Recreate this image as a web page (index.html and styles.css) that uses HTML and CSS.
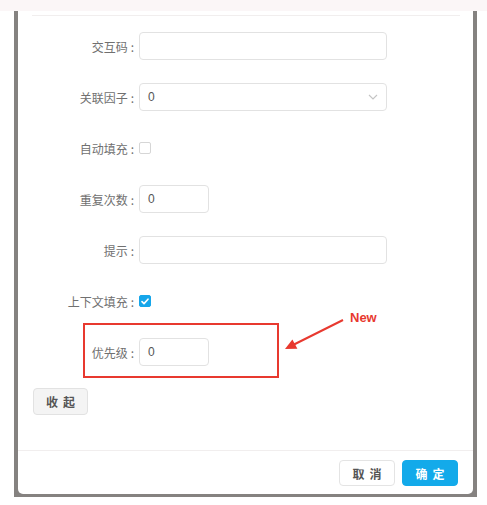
FILE: index.html
```html
<!DOCTYPE html>
<html lang="zh-CN">
<head>
    <meta charset="UTF-8">
    <title>编辑</title>
    <link rel="stylesheet" href="styles.css">
</head>
<body>
    <div class="top-strip"></div>
    <div class="frame">
        <div class="modal">
            <div class="modal-header"></div>

            <div class="modal-body">
                <div class="form-row">
                    <label class="form-label">交互码</label>
                    <div class="input wide"></div>
                </div>
                <div class="form-row">
                    <label class="form-label">关联因子</label>
                    <div class="input wide select">
                        <span>0</span>
                        <svg class="chevron" width="10" height="6" viewBox="0 0 10 6"><path d="M1 1l4 4 4-4" fill="none" stroke="#c4c4c4" stroke-width="1.1"/></svg>
                    </div>
                </div>
                <div class="form-row">
                    <label class="form-label">自动填充</label>
                    <span class="checkbox"></span>
                </div>
                <div class="form-row">
                    <label class="form-label">重复次数</label>
                    <div class="input short"><span>0</span></div>
                </div>
                <div class="form-row">
                    <label class="form-label">提示</label>
                    <div class="input wide"></div>
                </div>
                <div class="form-row">
                    <label class="form-label">上下文填充</label>
                    <span class="checkbox checked">
                        <svg width="8" height="7" viewBox="0 0 8 7"><path d="M1 3.6l2 2 4-4.4" fill="none" stroke="#fff" stroke-width="1.6" stroke-linecap="round" stroke-linejoin="round"/></svg>
                    </span>
                </div>
                <div class="form-row">
                    <label class="form-label">优先级</label>
                    <div class="input short"><span>0</span></div>
                </div>

                <button class="btn btn-gray">收起</button>
            </div>

            <div class="modal-footer">
                <button class="btn btn-white">取消</button>
                <button class="btn btn-blue">确定</button>
            </div>
        </div>

        <!-- annotation drawn over the dialog -->
        <div class="mark-box"></div>
        <svg class="mark-arrow" width="72" height="44" viewBox="0 0 72 44">
            <line x1="63" y1="9" x2="14" y2="33.5" stroke="#e8392f" stroke-width="2"/>
            <polygon points="5,38 12.4,28.4 17.4,37.8" fill="#e8392f"/>
        </svg>
        <div class="mark-text">New</div>
    </div>
</body>
</html>
```

FILE: styles.css
```css
body {
    margin: 0;
    background: #ffffff;
    font-family: "Liberation Sans", "Noto Sans CJK SC", sans-serif;
    font-size: 12px;
    color: #666;
}

.top-strip {
    height: 11px;
    background: #fbf6f7;
}

/* grey window edge round the dialog */
.frame {
    position: relative;
    width: 455px;
    margin-left: 14px;
    padding: 0 4px 3px 4px;
    background: #858280;
}

.modal {
    background: #ffffff;
    border-radius: 0 0 5px 5px;
}

.modal-header {
    height: 4px;
    margin: 0 13px 0 14px;
    border-bottom: 1px solid #f1eeee;
}

.modal-body {
    padding: 16px 0 35px 15px;
}

.form-row {
    display: flex;
    align-items: center;
    height: 28px;
    margin-bottom: 23px;
}

.form-row:last-of-type {
    margin-bottom: 22px;
}

.form-label {
    width: 101px;
    padding-right: 5px;
    text-align: right;
    color: #707070;
    font-family: "Noto Sans CJK SC", sans-serif;
    font-size: 12px;
    white-space: nowrap;
}

.form-label::after {
    content: ":";
    margin-left: 3px;
}

.input {
    box-sizing: border-box;
    height: 28px;
    border: 1px solid #e2e2e2;
    border-radius: 4px;
    display: flex;
    align-items: center;
    padding: 0 8px;
    color: #555;
    font-size: 12px;
}

.input.wide {
    width: 248px;
}

.input.short {
    width: 70px;
}

.select {
    justify-content: space-between;
    padding-right: 8px;
}

.checkbox {
    box-sizing: border-box;
    width: 12px;
    height: 12px;
    border: 1px solid #d6d6d6;
    border-radius: 2px;
    background: #fff;
    display: flex;
    align-items: center;
    justify-content: center;
}

.checkbox.checked {
    background: #16a6ea;
    border-color: #16a6ea;
}

.btn {
    box-sizing: border-box;
    height: 27px;
    border-radius: 4px;
    font-family: "Noto Sans CJK SC", sans-serif;
    font-size: 12px;
    font-weight: bold;
    letter-spacing: 5px;
    padding: 0 0 0 5px;
    cursor: pointer;
}

.btn-gray {
    width: 55px;
    background: #f4f4f4;
    border: 1px solid #e2e2e2;
    color: #555;
}

.modal-footer {
    border-top: 1px solid #f1eeee;
    padding: 9px 15px 8px 0;
    display: flex;
    justify-content: flex-end;
    gap: 7px;
}

.modal-footer .btn {
    width: 56px;
    height: 26px;
}

.btn-white {
    background: #fff;
    border: 1px solid #e4e4e4;
    color: #555;
}

.btn-blue {
    background: #13aaea;
    border: 1px solid #13aaea;
    color: #fff;
}

/* red annotation */
.mark-box {
    position: absolute;
    left: 69px;
    top: 312px;
    width: 192px;
    height: 51px;
    border: 2px solid #e8392f;
}

.mark-arrow {
    position: absolute;
    left: 266px;
    top: 300px;
}

.mark-text {
    position: absolute;
    left: 336px;
    top: 299px;
    color: #e8392f;
    font-family: "Liberation Sans", sans-serif;
    font-size: 13px;
    font-weight: bold;
}
```
